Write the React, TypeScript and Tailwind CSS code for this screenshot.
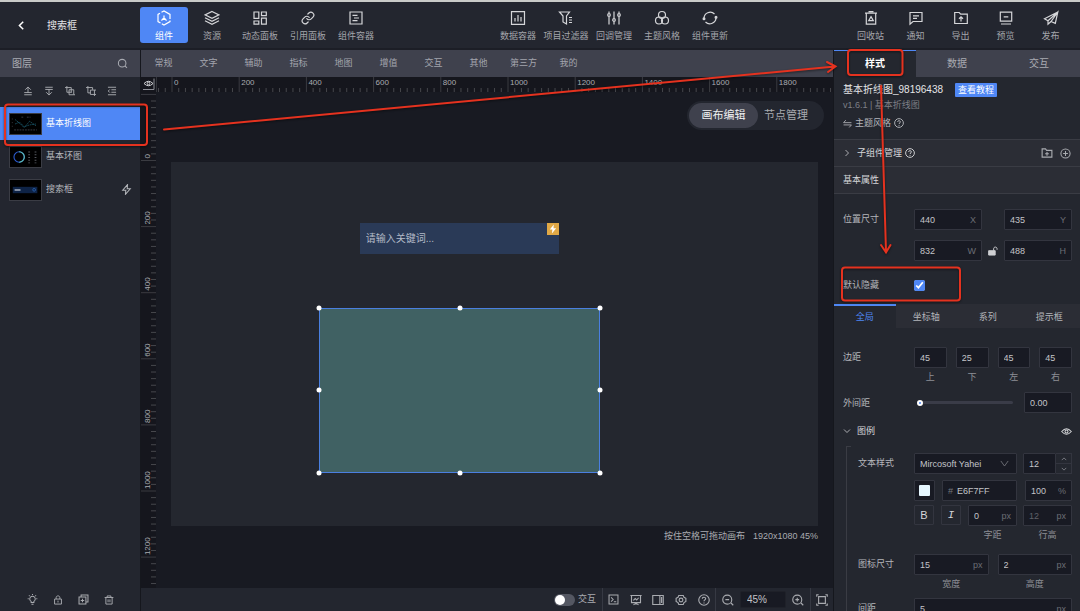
import React, { useState } from 'react';
import { Link } from 'lucide-react';

type IconProps = { d: string; size?: string; children?: React.ReactNode };

function Icon({ d, size = 'h-4 w-4', children }: IconProps) {
  return (
    <svg
      viewBox="0 0 16 16"
      className={`${size} shrink-0`}
      fill="none"
      stroke="currentColor"
      strokeWidth={size === 'h-4 w-4' ? 1.2 : 1.5}
      aria-hidden="true"
    >
      <path d={d} />
      {children}
    </svg>
  );
}

const icons = {
  component: <Icon d="M5.5 2.3 8 .9l6 3.5V9M14 10.5v1.1l-6 3.5-2.2-1.3M4.5 13 2 11.6V4.4l2-1.2M8 5.500v2.700l-2.600 2.300M8 8.200l2.600 2.300M6.500 8.500h3" />,
  layers: <Icon d="m8 1.5 7 3.4-7 3.4-7-3.4zM1 7.8l7 3.5 7-3.5M1 10.8l7 3.5 7-3.5" />,
  panel: <Icon d="M2 2h4.8v6.4H2zM9.5 2h4.8v3.6H9.5zM2 11h4.8v3.2H2zM9.5 8.2h4.8v6H9.5z" />,
  link: <Link className="my-px h-[14px] w-[14px]" strokeWidth={2} />,
  container: <Icon d="M2 2h12v12H2zM4.5 5.3h5M6 8h5M4.5 10.7h5" />,
  data: <Icon d="M1.5 1.7h13v12.6h-13zM5 8v3.5M8 5v6.5M11 7v4.5" />,
  filter: <Icon d="M1.5 2h10L8.5 6v8L5 12V6zM11 7.5h3M11 10h3M11 12.5h3" />,
  sliders: (
    <Icon d="M3 1.5v2M3 6.5v8M8 1.5v7M8 11.5v3M13 1.5v2M13 6.5v8">
      <circle cx="3" cy="5" r="1.3" />
      <circle cx="8" cy="10" r="1.3" />
      <circle cx="13" cy="5" r="1.3" />
    </Icon>
  ),
  theme: (
    <Icon d="">
      <circle cx="8" cy="5" r="3.5" />
      <circle cx="5" cy="10.5" r="3.5" />
      <circle cx="11" cy="10.5" r="3.5" />
    </Icon>
  ),
  update: (
    <Icon d="M2 8.500A6.200 6.200 0 0 1 12.500 4M14 7.500A6.200 6.200 0 0 1 3.500 12">
      <circle cx="2" cy="8.700" r=".9" fill="currentColor" />
      <circle cx="14" cy="7.300" r=".9" fill="currentColor" />
    </Icon>
  ),
  recycle: <Icon d="M2 3.2h12M5.5 1.7h5M3.3 3.2v11h9.4v-11M8 6.6l2.3 4H5.7z" />,
  notice: <Icon d="M2 2.5h12v9H5l-3 2.7zM5 5.8h6M5 8.3h4" />,
  export: <Icon d="M1.7 13.5v-11h4.5l1.5 1.7h6.6v9.3zM8 11.5V7M6 8.7 8 6.8l2 1.9" />,
  preview: <Icon d="M2.3 2.2h11.4v9H2.3zM3 14h10M5.7 6.8h4.6" />,
  publish: <Icon d="M14.800 2 1.500 8.800 5 10.800 14.800 2l-2.500 11.300L8 11.500M5 10.800v3.400l3-2.700L14.800 2" />,
};

const leftNav = [
  { label: '组件', icon: icons.component },
  { label: '资源', icon: icons.layers },
  { label: '动态面板', icon: icons.panel },
  { label: '引用面板', icon: icons.link },
  { label: '组件容器', icon: icons.container },
];

const centerNav = [
  { label: '数据容器', icon: icons.data },
  { label: '项目过滤器', icon: icons.filter },
  { label: '回调管理', icon: icons.sliders },
  { label: '主题风格', icon: icons.theme },
  { label: '组件更新', icon: icons.update },
];

const rightNav = [
  { label: '回收站', icon: icons.recycle },
  { label: '通知', icon: icons.notice },
  { label: '导出', icon: icons.export },
  { label: '预览', icon: icons.preview },
  { label: '发布', icon: icons.publish },
];

const categories = ['常规', '文字', '辅助', '指标', '地图', '增值', '交互', '其他', '第三方', '我的'];

const layerTools = [
  { label: '置顶', d: 'M8 11V2M3.500 6 8 1.500 12.500 6M2 10.500h12M2 14h12' },
  { label: '置底', d: 'M8 5v9M3.500 10 8 14.500 12.500 10M2 5.500h12M2 2h12' },
  { label: '成组', d: 'M3 0v10h8M0 2.500h10V10M6.500 6H14v8H6.500zM14 14h2' },
  { label: '取消成组', d: 'M3 0v11h4M0 2.500h10.500V6M7 6.500h9M13.500 6.500V16M7 6.500v7h9' },
  { label: '收起', d: 'M1.500 2h13M7 6h7.500M7 10h7.500M1.500 14h13M4.500 5.500 2 8l2.500 2.500' },
];

const layers = [
  { name: '基本折线图', kind: 'line', event: false },
  { name: '基本环图', kind: 'ring', event: false },
  { name: '搜索框', kind: 'search', event: true },
];

function HeaderButton({ label, icon, active, narrow }: { label: string; icon: React.ReactNode; active?: boolean; narrow?: boolean }) {
  return (
    <button
      type="button"
      className={`flex h-9 flex-col items-center justify-center gap-1 whitespace-nowrap rounded-[3px] pt-px text-[9px] leading-3 ${
        narrow ? 'w-[45px]' : 'w-12'
      } ${active ? 'bg-[#4f87f5] text-white' : 'text-[#a3a5ab]'}`}
    >
      <span className={active ? 'text-white' : 'text-[#d5d6d9]'}>{icon}</span>
      {label}
    </button>
  );
}

function Thumb({ kind }: { kind: string }) {
  return (
    <svg viewBox="0 0 33 22" className="h-[22px] w-[33px] shrink-0 border border-[#3a3c44] bg-black" fill="none" aria-hidden="true">
      {kind === 'line' && (
        <>
          <path d="M5 6l6 5 4 4 6-7 7 5M5 11l5-2 5 5 6-2 7-1" stroke="#1d5f74" strokeWidth=".8" strokeDasharray="2 .7" />
          <path d="M4 17.500h25M12 3.500h3M18 3.500h4" stroke="#4a4f58" strokeWidth=".8" strokeDasharray="2 1" />
          <path d="M2 5v12" stroke="#4a4f58" strokeWidth=".8" strokeDasharray="1 3" />
        </>
      )}
      {kind === 'ring' && (
        <>
          <circle cx="9.500" cy="11" r="5.700" stroke="#2b5bd0" strokeWidth="1.200" />
          <path d="M9.500 5.300a5.700 5.700 0 0 1 0 11.400" stroke="#5fc4b5" strokeWidth="1.200" />
          <path d="M20.500 5v13M27.500 5v13" stroke="#55585f" strokeWidth="2" strokeDasharray="1 2" />
        </>
      )}
      {kind === 'search' && (
        <>
          <path d="M2.500 7.500h27v7h-27z" fill="#0e2346" />
          <path d="M4.500 11h6.500" stroke="#aeb6c4" strokeWidth="1.600" />
          <circle cx="26" cy="10.800" r="1.500" stroke="#2e6cc0" strokeWidth=".8" />
        </>
      )}
    </svg>
  );
}

function HorizontalRuler() {
  const ticks = Array.from({ length: 101 }, (_, i) => i - 2);
  return (
    <svg className="h-[15px] min-w-0 flex-1 border-l border-[#33353b]" aria-hidden="true">
      {ticks.map((n) => {
        const x = 15 + n * 6.72;
        const major = n % 10 === 0;
        return (
          <g key={n}>
            <path d={`M${x} ${major ? 0 : 11}V15`} stroke={major ? '#3a3b41' : '#46474c'} />
            {major && (
              <text x={x + 2} y="8" fontSize="8" fill="#a9abb0">
                {n * 20}
              </text>
            )}
          </g>
        );
      })}
    </svg>
  );
}

function VerticalRuler() {
  const ticks = Array.from({ length: 75 }, (_, i) => i - 10);
  return (
    <div className="relative w-[15px] shrink-0 overflow-hidden bg-[#15161d]">
      <svg className="absolute inset-0 h-full w-full" aria-hidden="true">
        {ticks.map((n) => {
          const y = 68.5 + n * 6.61;
          const major = n % 10 === 0;
          return (
            <g key={n}>
              <path d={`M${major ? 0 : 10} ${y}H15`} stroke={major ? '#3a3b41' : '#46474c'} />
              {major && n >= 0 && (
                <text transform={`translate(9 ${y - 2}) rotate(-90)`} fontSize="8" fill="#a9abb0">
                  {n * 20}
                </text>
              )}
            </g>
          );
        })}
      </svg>
    </div>
  );
}

// canvas coordinates are in project pixels (1920 x 1080)
const place = (x: number, y: number, w: number, h: number) => ({
  left: `${(x / 1920) * 100}%`,
  top: `${(y / 1080) * 100}%`,
  width: `${(w / 1920) * 100}%`,
  height: `${(h / 1080) * 100}%`,
});

const handles = [
  'left-0 top-0',
  'left-1/2 top-0',
  'left-full top-0',
  'left-0 top-1/2',
  'left-full top-1/2',
  'left-0 top-full',
  'left-1/2 top-full',
  'left-full top-full',
];

function Field({ label, value, unit, width = 'flex-1', prefix, muted }: { label: string; value: string; unit?: string; width?: string; prefix?: string; muted?: boolean }) {
  return (
    <label className={`flex h-[21px] min-w-0 items-center rounded-[1px] border border-[#33353f] bg-[#181a23] px-[5px] ${width}`}>
      {prefix && <span className="mr-1 text-[#75777e]">{prefix}</span>}
      <input
        aria-label={label}
        defaultValue={value}
        className={`w-full min-w-0 flex-1 bg-transparent outline-none ${muted ? 'text-[#5f6168]' : 'text-[#c3c4c8]'}`}
      />
      {unit && <span className="text-[#6b6d74]">{unit}</span>}
    </label>
  );
}

function Captioned({ caption, children }: { caption: string; children: React.ReactNode }) {
  return (
    <div className="flex min-w-0 flex-1 flex-col gap-[3px]">
      {children}
      <span className="h-3 text-center text-[#8d8f96]">{caption}</span>
    </div>
  );
}

function Help({ size = 'h-[10px] w-[10px]' }: { size?: string }) {
  return (
    <Icon size={size} d="M5.800 6.300C5.800 3.500 10.300 3.700 10.200 6.300 10.100 7.900 8 7.900 8 9.700M8 11.200v1.300">
      <circle cx="8" cy="8" r="7" />
    </Icon>
  );
}

function Header() {
  return (
    <header className="flex h-12 shrink-0 items-center justify-between border-b-2 border-[#1c1e26] pr-[7px]">
      <div className="flex items-center">
        <div className="flex w-[140px] items-center gap-5 pl-4">
          <button type="button" aria-label="返回" className="text-white">
            <svg viewBox="0 0 16 16" className="h-[11px] w-[11px]" fill="none" stroke="currentColor" strokeWidth="2.200" aria-hidden="true">
              <path d="M10.500 2.500 5 8l5.500 5.500" />
            </svg>
          </button>
          <h1 className="pt-px text-[10px] leading-4 text-[#e4e5e7]">搜索框</h1>
        </div>
        <nav className="flex">
          {leftNav.map((item, i) => (
            <HeaderButton key={item.label} {...item} active={i === 0} />
          ))}
        </nav>
      </div>
      <nav className="flex">
        {centerNav.map((item) => (
          <HeaderButton key={item.label} {...item} />
        ))}
      </nav>
      <nav className="flex">
        {rightNav.map((item) => (
          <HeaderButton key={item.label} {...item} narrow />
        ))}
      </nav>
    </header>
  );
}

function LayerPanel() {
  const [selected, setSelected] = useState('基本折线图');

  return (
    <aside className="flex w-[141px] shrink-0 flex-col border-r border-[#15171d]">
      <div className="flex h-[27px] items-center justify-between bg-[#3f414d] pl-3 pr-3 text-[10px] text-[#a9abb2]">
        <h2>图层</h2>
        <button type="button" aria-label="搜索图层">
          <Icon size="h-[11px] w-[11px]" d="m11.500 11.500 3 3">
            <circle cx="7.500" cy="7.500" r="5.500" />
          </Icon>
        </button>
      </div>
      <div className="flex h-[30px] items-center justify-center gap-[11px] pb-[3px] text-[#a9abb0]">
        {layerTools.map((tool) => (
          <button key={tool.label} type="button" aria-label={tool.label}>
            <Icon size="h-[10px] w-[10px]" d={tool.d} />
          </button>
        ))}
      </div>
      <ul className="flex-1">
        {layers.map((layer) => (
          <li key={layer.name}>
            <button
              type="button"
              onClick={() => setSelected(layer.name)}
              className={`flex h-[33px] w-full items-center gap-1 pl-[9px] pr-2 text-[9px] ${
                selected === layer.name ? 'bg-[#4f87f5] text-white' : 'text-[#b4b6bb]'
              }`}
            >
              <Thumb kind={layer.kind} />
              {layer.name}
              {layer.event && (
                <span className="ml-auto">
                  <Icon size="h-[11px] w-[11px]" d="M9.500 1 2.500 9h4.500L6.500 15l7-8H9z" />
                </span>
              )}
            </button>
          </li>
        ))}
      </ul>
      <div className="flex h-[23px] items-center justify-center gap-[15px] text-[#a9abb0]">
        <button type="button" aria-label="显示">
          <Icon size="h-[11px] w-[11px]" d="M6 12.500v-1.700a4 4 0 1 1 4 0v1.700zM6.500 14.800h3M8 0v1.500M1 7h1.500M13.500 7H15M2.800 2l1 1M13.200 2l-1 1" />
        </button>
        <button type="button" aria-label="锁定">
          <Icon size="h-[10px] w-[10px]" d="M2.500 6.500h11v8h-11zM5 6.500V4.200C5 .5 11 .5 11 4.200v2.300M8 9v3" />
        </button>
        <button type="button" aria-label="复制">
          <Icon size="h-[11px] w-[11px]" d="M1.500 4.500h10v10h-10zM4.500 4V1.500h10v10H12M6.500 7v5M4 9.500h5" />
        </button>
        <button type="button" aria-label="删除">
          <Icon size="h-[10px] w-[10px]" d="M1 4h14M5 3.500v-2h6v2M3 4v10.500h10V4M6.500 7v4.500M9.500 7v4.500" />
        </button>
      </div>
    </aside>
  );
}

function Toolbar() {
  return (
    <div className="flex h-[23px] shrink-0 items-center justify-end bg-[#23262f] text-[9px] text-[#a9abb0]">
      <label className="flex items-center gap-[3px] pr-[6px]">
        <input
          type="checkbox"
          role="switch"
          className="h-3 w-[21px] appearance-none rounded-full bg-[#545762] before:m-px before:block before:h-[10px] before:w-[10px] before:rounded-full before:bg-white"
        />
        交互
      </label>
      <div className="flex h-full w-[113px] items-center justify-around border-l border-[#363943]">
        <button type="button" aria-label="控制台">
          <Icon size="h-[11px] w-[11px]" d="M1.500 1.500h13v13h-13zM4.500 5l3 3-3 3M8.500 11.200h3.500" />
        </button>
        <button type="button" aria-label="性能">
          <Icon size="h-3 w-3" d="M.5 2h15M2 2v9.500h12V2M8 11.500v2.500M4.500 14.500 8 12.500l3.500 2M4.500 8.500 7 6l2 2 2.500-3" />
        </button>
        <button type="button" aria-label="侧栏">
          <Icon size="h-3 w-3" d="M1 2h14v12H1zM10.500 2v12M12.800 4v8" />
        </button>
        <button type="button" aria-label="设置">
          <Icon size="h-3 w-3" d="M5 2h6l1 2.500 2.500 1.200V10L12 11.500 11 14H5l-1-2.500L1.500 10V5.700L4 4.500z">
            <circle cx="8" cy="8" r="2.500" />
          </Icon>
        </button>
        <button type="button" aria-label="帮助">
          <Help size="h-3 w-3" />
        </button>
      </div>
      <div className="flex h-full items-center border-x border-[#363943]">
        <button type="button" aria-label="缩小" className="flex w-6 justify-center">
          <Icon size="h-3 w-3" d="m12 12 3 3M4.500 7.500h5">
            <circle cx="7" cy="7.500" r="6" />
          </Icon>
        </button>
        <input
          aria-label="缩放比例"
          defaultValue="45%"
          className="h-[17px] w-[46px] rounded-[2px] border border-[#1f2129] bg-[#181a23] pl-[6px] text-[10px] text-[#c3c4c8] outline-none"
        />
        <button type="button" aria-label="放大" className="flex w-6 justify-center">
          <Icon size="h-3 w-3" d="m12 12 3 3M4.500 7.500h5M7 5v5">
            <circle cx="7" cy="7.500" r="6" />
          </Icon>
        </button>
      </div>
      <button type="button" aria-label="适应画布" className="flex w-[22px] justify-center">
        <Icon size="h-3 w-3" d="M3.500 3.500h9v9h-9zM1 3.500V1h2.500M12.500 1H15v2.500M1 12.500V15h2.500M15 12.500V15h-2.500" />
      </button>
    </div>
  );
}

function Workspace() {
  return (
    <main className="flex min-w-0 flex-1 flex-col bg-[#181a22]">
      <nav className="flex h-[27px] shrink-0 bg-[#3f414d] text-[9px] text-[#a3a5ad]">
        {categories.map((name) => (
          <button key={name} type="button" className="w-[45px]">
            {name}
          </button>
        ))}
      </nav>
      <div className="flex h-[15px] shrink-0 bg-[#15161d]">
        <button type="button" aria-label="参考线" className="flex w-[15px] items-center justify-center text-[#cfd0d3]">
          <svg viewBox="0 0 15 15" className="h-[15px] w-[15px]" fill="none" stroke="currentColor" aria-hidden="true">
            <path d="M3 6.500q4.500-4.500 9 0-4.500 4.500-9 0z" />
            <circle cx="7.500" cy="6.500" r="1.300" />
            <path d="M2 12.500h11v-11" stroke="#8d8f96" />
          </svg>
        </button>
        <HorizontalRuler />
      </div>
      <div className="flex min-h-0 flex-1">
        <VerticalRuler />
        <div className="flex min-w-0 flex-1 flex-col overflow-hidden pt-[9px]">
          <div className="mr-[9px] flex h-[29px] items-center self-end rounded-full bg-[#23262f] p-[2px] text-[11px]">
            <button type="button" className="h-[25px] w-[69px] rounded-full bg-[#3f414d] text-[#f0f1f2]">
              画布编辑
            </button>
            <button type="button" className="h-[25px] w-16 pr-2 text-[#a9abb0]">
              节点管理
            </button>
          </div>
          <div className="relative mx-[15px] mt-8 aspect-video shrink-0 bg-[#24272f]">
            <div className="absolute flex items-center bg-[#2a3a57]" style={place(560, 182, 592, 91)}>
              <input
                aria-label="搜索"
                placeholder="请输入关键词..."
                className="h-full w-full bg-transparent pl-[6px] text-[10px] outline-none placeholder:text-[#b3bac7]"
              />
              <span className="absolute right-0 top-0 flex h-3 w-3 items-center justify-center bg-[#e0a846]">
                <svg viewBox="0 0 10 10" className="h-[10px] w-[10px]" fill="white" aria-hidden="true">
                  <path d="M5.800.5 1.800 5.600h2.600l-.5 4 4.300-5.400H5.500z" />
                </svg>
              </span>
            </div>
            <div className="absolute bg-[#406163] ring-1 ring-inset ring-[#4a7fe0]" style={place(440, 433, 834, 490)}>
              {handles.map((pos) => (
                <span key={pos} className={`absolute h-[5px] w-[5px] -translate-x-1/2 -translate-y-1/2 rounded-full bg-white ${pos}`} />
              ))}
            </div>
          </div>
          <p className="mx-[15px] mt-[2px] flex justify-end gap-2 text-[9px] leading-4 text-[#a9abb0]">
            <span>按住空格可拖动画布</span>
            <span>1920x1080 45%</span>
          </p>
        </div>
      </div>
      <Toolbar />
    </main>
  );
}

function Tabs({ items }: { items: string[] }) {
  const [active, setActive] = useState(items[0]);

  return (
    <div role="tablist" className="flex h-6 shrink-0 bg-[#2b2d35] text-[#b4b6bb]">
      {items.map((item) => (
        <button
          key={item}
          type="button"
          role="tab"
          aria-selected={active === item}
          onClick={() => setActive(item)}
          className={`flex-1 border-t-2 ${active === item ? 'border-[#4f87f5] bg-[#24272f] text-[#4f87f5]' : 'border-transparent'}`}
        >
          {item}
        </button>
      ))}
    </div>
  );
}

function StylePanel() {
  return (
    <aside className="flex w-[247px] shrink-0 flex-col overflow-hidden border-l border-[#15171d] bg-[#24272f] text-[9px] leading-3 text-[#b4b6bb]">
      <div role="tablist" className="flex h-[27px] shrink-0 bg-[#3f414d] text-[10px] text-[#a9abb2]">
        <button type="button" role="tab" aria-selected="true" className="flex-1 border-t border-[#4f87f5] bg-[#24272f] font-bold text-white">
          样式
        </button>
        <button type="button" role="tab" aria-selected="false" className="flex-1">
          数据
        </button>
        <button type="button" role="tab" aria-selected="false" className="flex-1">
          交互
        </button>
      </div>
      <div className="h-[62px] shrink-0 px-[9px] pt-[5px]">
        <div className="flex h-4 items-center gap-3">
          <h2 className="text-[10px] text-[#e4e5e7]">基本折线图_98196438</h2>
          <a href="#" className="rounded-[1px] bg-[#4f87f5] px-[3px] leading-[14px] text-white">
            查看教程
          </a>
        </div>
        <p className="mt-px text-[#7d7f86]">v1.6.1 | 基本折线图</p>
        <div className="mt-[6px] flex items-center gap-[3px]">
          <Icon size="h-[9px] w-[9px]" d="M1 6.500h14M1 6.500 5 2M15 10.500H1M15 10.500 11 15" />
          主题风格
          <Help />
        </div>
      </div>
      <div className="flex h-[27px] shrink-0 items-center border-t border-[#3a3c44] bg-[#2b2d35] px-[9px] text-[#d5d6d9]">
        <Icon size="h-2 w-2" d="m5 2 6 6-6 6" />
        <span className="ml-[6px] mr-[3px]">子组件管理</span>
        <Help />
        <button type="button" aria-label="新建分组" className="ml-auto text-[#a9abb0]">
          <Icon size="h-3 w-3" d="M1.500 13.500v-11H6l1.500 2h7v9zM8 6.500v5M5.500 9h5" />
        </button>
        <button type="button" aria-label="添加子组件" className="ml-[7px] text-[#a9abb0]">
          <Icon size="h-[11px] w-[11px]" d="M8 4.500v7M4.500 8h7">
            <circle cx="8" cy="8" r="6.700" />
          </Icon>
        </button>
      </div>
      <h3 className="flex h-7 shrink-0 items-center border-y border-[#3a3c44] bg-[#2b2d35] px-[9px] text-[#d5d6d9]">基本属性</h3>
      <div className="shrink-0 pb-[13px] pl-[9px] pr-2 pt-[15px]">
        <div className="flex">
          <span className="w-[71px] shrink-0 pt-1">位置尺寸</span>
          <div className="grid flex-1 grid-cols-[1fr_22px_1fr] items-center gap-y-[10px]">
            <Field label="X" value="440" unit="X" />
            <span />
            <Field label="Y" value="435" unit="Y" />
            <Field label="宽" value="832" unit="W" />
            <button type="button" aria-label="锁定比例" className="flex justify-center text-[#cfd0d3]">
              <Icon size="h-[10px] w-[10px]" d="M9 7.500V4.500C9 .8 14.500.8 14.500 4.500V6">
                <path d="M1 7.500h10.500v7H1z" fill="currentColor" />
              </Icon>
            </button>
            <Field label="高" value="488" unit="H" />
          </div>
        </div>
        <div className="mt-[18px] flex h-3 items-center">
          <label htmlFor="hidden-default" className="w-[71px]">
            默认隐藏
          </label>
          <input id="hidden-default" type="checkbox" defaultChecked className="h-[11px] w-[11px] accent-[#4f87f5]" />
        </div>
      </div>
      <Tabs items={['全局', '坐标轴', '系列', '提示框']} />
      <div className="shrink-0 pl-[9px] pr-2 pt-[19px]">
        <div className="flex">
          <span className="w-[71px] shrink-0 pt-1">边距</span>
          <div className="flex flex-1 gap-[9px]">
            <Captioned caption="上"><Field label="上边距" value="45" width="flex-none" /></Captioned>
            <Captioned caption="下"><Field label="下边距" value="25" width="flex-none" /></Captioned>
            <Captioned caption="左"><Field label="左边距" value="45" width="flex-none" /></Captioned>
            <Captioned caption="右"><Field label="右边距" value="45" width="flex-none" /></Captioned>
          </div>
        </div>
        <div className="mt-[9px] flex items-center">
          <label htmlFor="outer-gap" className="w-[71px] shrink-0">
            外间距
          </label>
          <input
            id="outer-gap"
            type="range"
            min="0"
            max="1"
            step="0.01"
            defaultValue="0"
            className="mx-[3px] h-[3px] min-w-0 flex-1 appearance-none rounded-full bg-[#3a3c48] [&::-webkit-slider-thumb]:h-[6px] [&::-webkit-slider-thumb]:w-[6px] [&::-webkit-slider-thumb]:appearance-none [&::-webkit-slider-thumb]:rounded-full [&::-webkit-slider-thumb]:border-2 [&::-webkit-slider-thumb]:border-white [&::-webkit-slider-thumb]:bg-[#4f87f5]"
          />
          <Field label="外间距数值" value="0.00" width="ml-2 w-12" />
        </div>
        <div className="mt-3 flex h-3 items-center gap-[6px] text-[#d5d6d9]">
          <Icon size="h-2 w-2" d="m2 5 6 6 6-6" />
          图例
          <button type="button" aria-label="显示图例" className="ml-auto">
            <Icon size="h-[11px] w-[11px]" d="M1 8q7-8 14 0-7 8-14 0z">
              <circle cx="8" cy="8" r="2.200" />
            </Icon>
          </button>
        </div>
        <div className="relative ml-[3px] mt-[9px] border-l border-[#3a3c44] pl-[11px] pt-[7px] before:absolute before:left-0 before:top-0 before:h-px before:w-1 before:bg-[#3a3c44]">
          <div className="flex">
            <span className="w-14 shrink-0 pt-1">文本样式</span>
            <div className="min-w-0 flex-1">
              <div className="flex gap-[6px]">
                <div className="relative flex-1">
                  <select
                    aria-label="字体"
                    className="h-[21px] w-full appearance-none rounded-[1px] border border-[#33353f] bg-[#181a23] pl-[5px] text-[#c3c4c8]"
                  >
                    <option>Mircosoft Yahei</option>
                  </select>
                  <span className="pointer-events-none absolute right-2 top-[6px] text-[#75777e]">
                    <Icon size="h-[9px] w-[9px]" d="m1.500 3.500 6.500 9 6.500-9" />
                  </span>
                </div>
                <div className="flex w-[49px]">
                  <Field label="字号" value="12" />
                  <div className="flex w-4 flex-col border border-l-0 border-[#33353f]">
                    <button type="button" aria-label="增大字号" className="flex flex-1 items-center justify-center border-b border-[#33353f]">
                      <Icon size="h-[6px] w-[6px]" d="m2 11 6-6 6 6" />
                    </button>
                    <button type="button" aria-label="减小字号" className="flex flex-1 items-center justify-center">
                      <Icon size="h-[6px] w-[6px]" d="m2 5 6 6 6-6" />
                    </button>
                  </div>
                </div>
              </div>
              <div className="mt-[6px] flex">
                <button
                  type="button"
                  aria-label="文字颜色"
                  className="flex h-[21px] w-[21px] items-center justify-center rounded-[1px] border border-[#33353f] bg-[#181a23]"
                >
                  <span className="h-[11px] w-[11px] rounded-[1px] bg-[#e6f7ff]" />
                </button>
                <Field label="颜色值" value="E6F7FF" prefix="#" width="ml-[7px] flex-1" />
                <Field label="不透明度" value="100" unit="%" width="ml-2 w-[47px]" />
              </div>
              <div className="mt-1 flex">
                <button type="button" aria-label="加粗" className="h-5 w-5 rounded-[1px] border border-[#33353f] text-[11px] text-[#d5d6d9]">
                  B
                </button>
                <button type="button" aria-label="斜体" className="ml-[7px] h-5 w-5 rounded-[1px] border border-[#33353f] font-['Liberation_Mono',monospace] text-[11px] italic text-[#d5d6d9]">
                  I
                </button>
                <div className="ml-[7px] flex min-w-0 flex-1 gap-[6px]">
                  <Captioned caption="字距"><Field label="字距" value="0" unit="px" width="flex-none" /></Captioned>
                  <Captioned caption="行高"><Field label="行高" value="12" unit="px" width="flex-none" muted /></Captioned>
                </div>
              </div>
            </div>
          </div>
          <div className="mt-[13px] flex">
            <span className="w-14 shrink-0 pt-1">图标尺寸</span>
            <div className="flex min-w-0 flex-1 gap-[9px]">
              <Captioned caption="宽度"><Field label="图标宽度" value="15" unit="px" width="flex-none" /></Captioned>
              <Captioned caption="高度"><Field label="图标高度" value="2" unit="px" width="flex-none" /></Captioned>
            </div>
          </div>
          <div className="mt-2 flex">
            <span className="w-14 shrink-0 pt-1">间距</span>
            <Field label="图例间距" value="5" unit="px" />
          </div>
        </div>
      </div>
    </aside>
  );
}

// red guide marks drawn over the editor
function Guide() {
  return (
    <svg
      className="pointer-events-none absolute left-0 top-0 h-[611px] w-[1080px] drop-shadow-[0_1px_1px_rgba(0,0,0,0.5)]"
      fill="none"
      stroke="#e5321f"
      strokeWidth="2"
      strokeLinecap="round"
      aria-hidden="true"
    >
      <rect x="5" y="104.500" width="142" height="40.500" rx="3" />
      <rect x="848" y="50" width="54.500" height="25" rx="3" />
      <rect x="842" y="267.500" width="118" height="33" rx="3" />
      <path d="M164 129.500 835 66.500M827 62l8.500 4.500-7.500 5.500" />
      <path d="M881 86l5 165.500M881 245l5 7.500 4.500-7.500" />
    </svg>
  );
}

export default function App() {
  return (
    <div className="relative flex h-screen flex-col overflow-hidden border-t-2 border-[#c9cbc8] bg-[#23262f] font-['Liberation_Sans','Noto_Sans_CJK_SC',sans-serif]">
      <Header />
      <div className="flex min-h-0 flex-1">
        <LayerPanel />
        <Workspace />
        <StylePanel />
      </div>
      <div className="absolute -top-[2px] left-0">
        <Guide />
      </div>
    </div>
  );
}
